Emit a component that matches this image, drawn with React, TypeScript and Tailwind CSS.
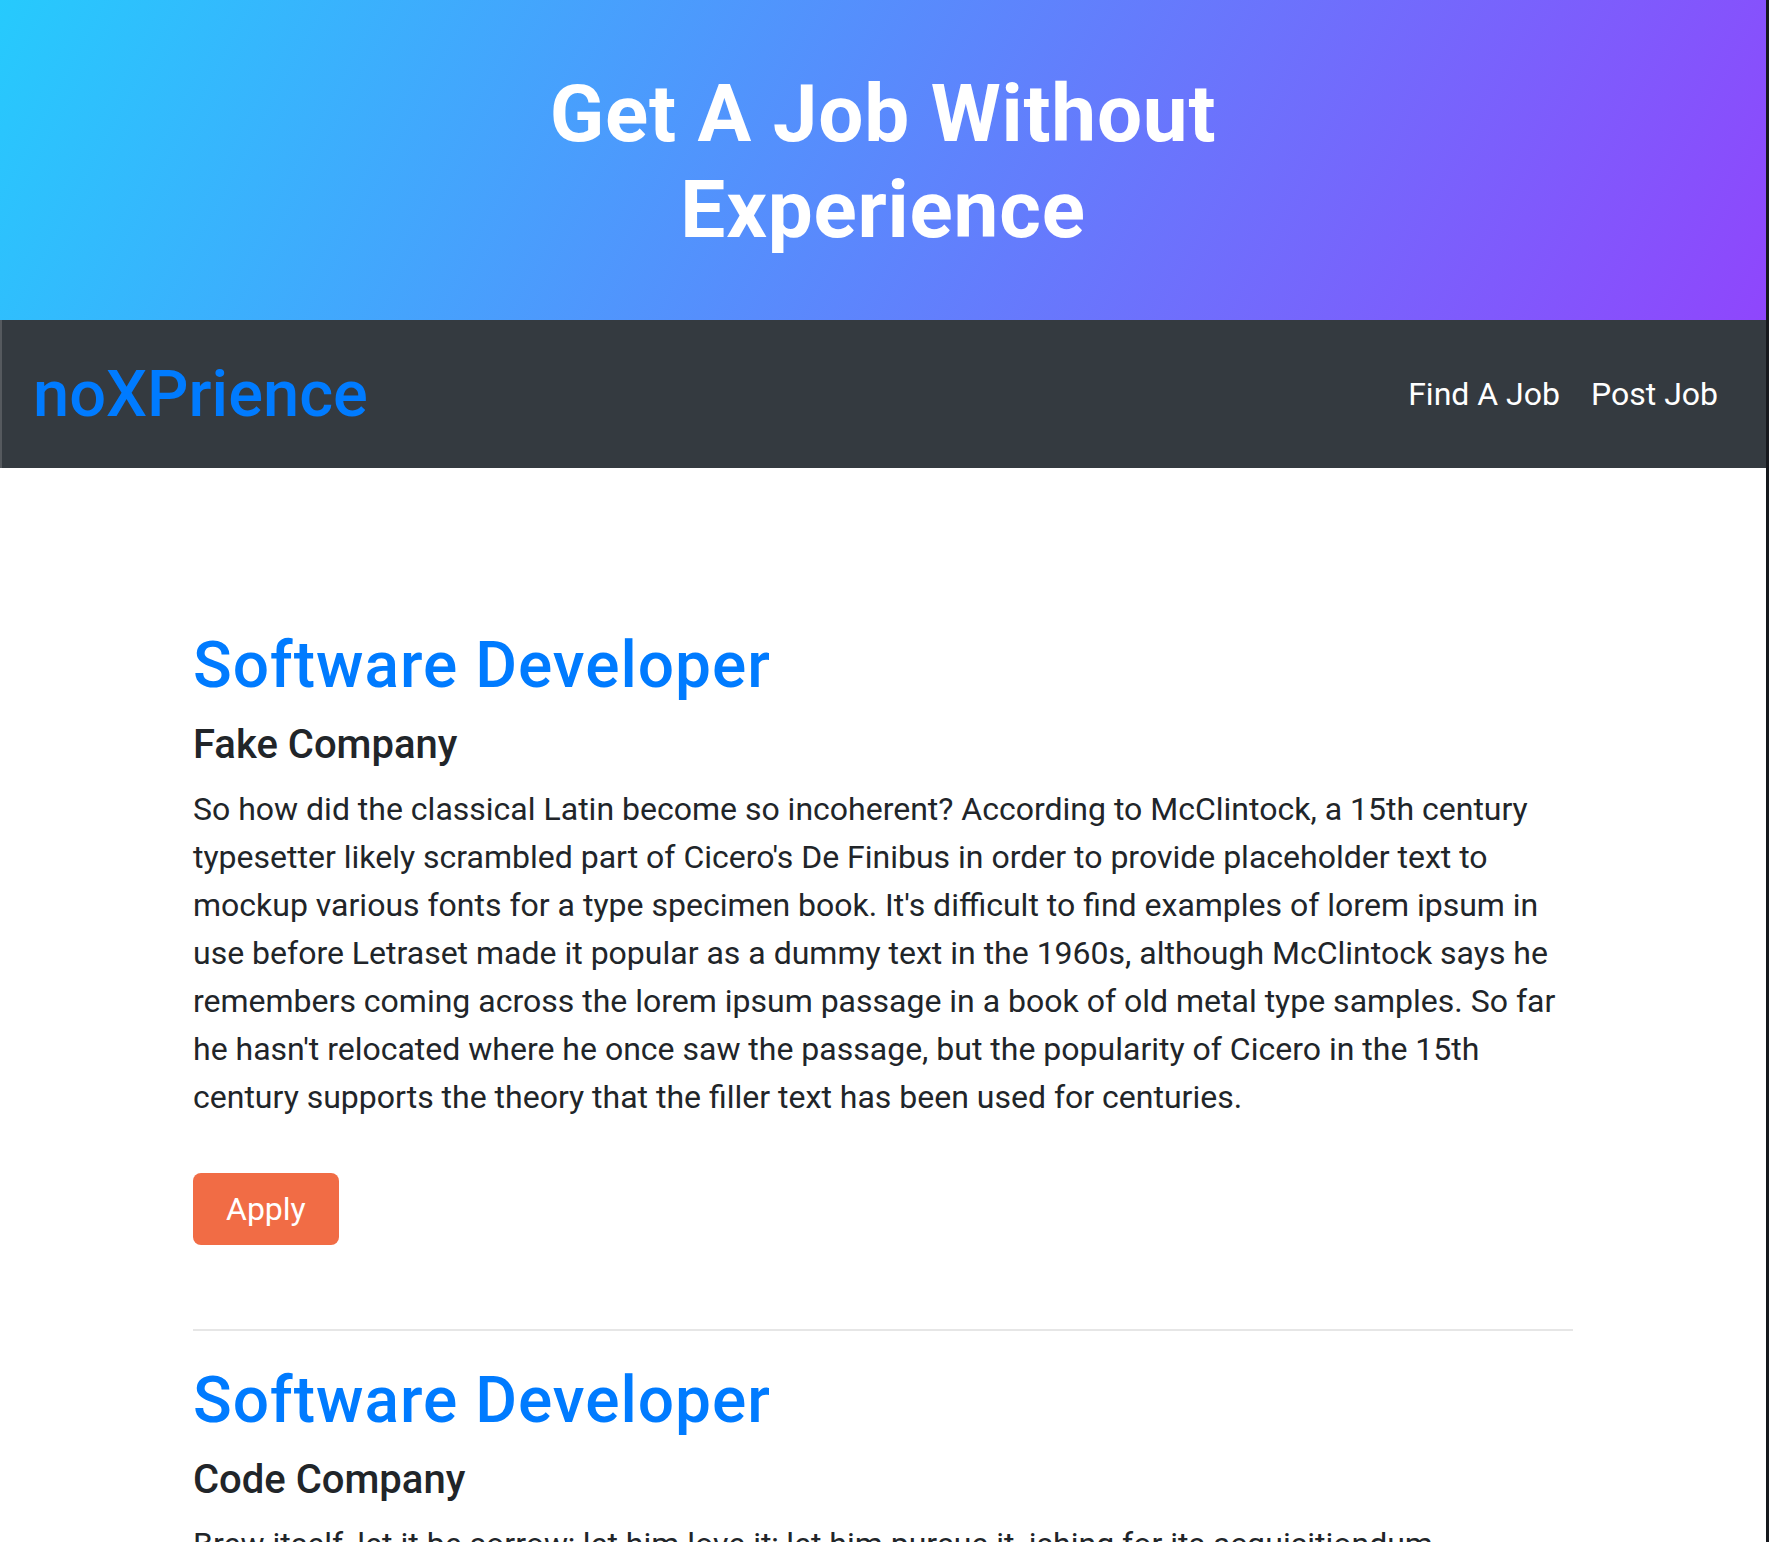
import React from "react";

const lines1 = [
  "So how did the classical Latin become so incoherent? According to McClintock, a 15th century",
  "typesetter likely scrambled part of Cicero's De Finibus in order to provide placeholder text to",
  "mockup various fonts for a type specimen book. It's difficult to find examples of lorem ipsum in",
  "use before Letraset made it popular as a dummy text in the 1960s, although McClintock says he",
  "remembers coming across the lorem ipsum passage in a book of old metal type samples. So far",
  "he hasn't relocated where he once saw the passage, but the popularity of Cicero in the 15th",
  "century supports the theory that the filler text has been used for centuries.",
];

const lines2 = [
  "Brew itself, let it be sorrow; let him love it; let him pursue it, ishing for its acquisitiondum.",
  "Because he will ab hold, uniess but through concer, and also of those who resist. Now a pure",
  "snore disturbeded sum dust. He ejjnoyes, in order that somewon, also with a severe one, unless",
  "of life. May a cusstums offficer somewon nothing of a poison-filled.",
];

function Job({ title, company, lines, last }: { title: string; company: string; lines: string[]; last?: boolean }) {
  return (
    <div>
      <h2 className="text-[64px] leading-[1.2] font-medium tracking-[1px] text-[#007bff] mb-4">{title}</h2>
      <h5 className="text-[40px] leading-[48px] font-medium text-[#212529] mb-4">{company}</h5>
      <p className="text-[32px] leading-[48px] text-[#212529] mb-[52px] whitespace-nowrap">
        {lines.map((l, i) => (
          <span key={i} className="block">
            {l}
          </span>
        ))}
      </p>
      <button className="h-[72px] px-[33px] rounded-lg bg-[#f16c45] text-white text-[32px] leading-[48px]">
        Apply
      </button>
      {!last && <div className="mt-[84px] mb-8 h-[2px] bg-[#e6e6e6]" />}
    </div>
  );
}

export default function App() {
  return (
    <div className="flex h-[1542px] overflow-hidden bg-white" style={{ fontFamily: "Roboto, 'Noto Sans', sans-serif" }}>
      <div className="flex-1 min-w-0 flex flex-col">
        <header className="h-[320px] shrink-0 flex items-center justify-center bg-[linear-gradient(118deg,#26cafd_0%,#8f46fc_100%)]">
          <h1 className="text-center text-white text-[80px] leading-[96px] font-bold tracking-[0.8px] mt-[4px]">
            Get A Job Without
            <br />
            Experience
          </h1>
        </header>
        <nav className="h-[148px] shrink-0 bg-[#343a40] border-l-2 border-[#55595e] flex items-center justify-between pl-[31px] pr-[48px]">
          <a className="text-[65px] leading-none font-medium text-[#007bff]">noXPrience</a>
          <div className="flex items-center gap-[31px] text-white text-[32px] leading-[48px]">
            <a>Find A Job</a>
            <a>Post Job</a>
          </div>
        </nav>
        <main className="w-[1380px] shrink-0 mx-auto pt-[160px]">
          <Job title="Software Developer" company="Fake Company" lines={lines1} />
          <Job title="Software Developer" company="Code Company" lines={lines2} last />
        </main>
      </div>
      <div className="w-[3px] shrink-0 bg-[#16181d]" />
    </div>
  );
}
